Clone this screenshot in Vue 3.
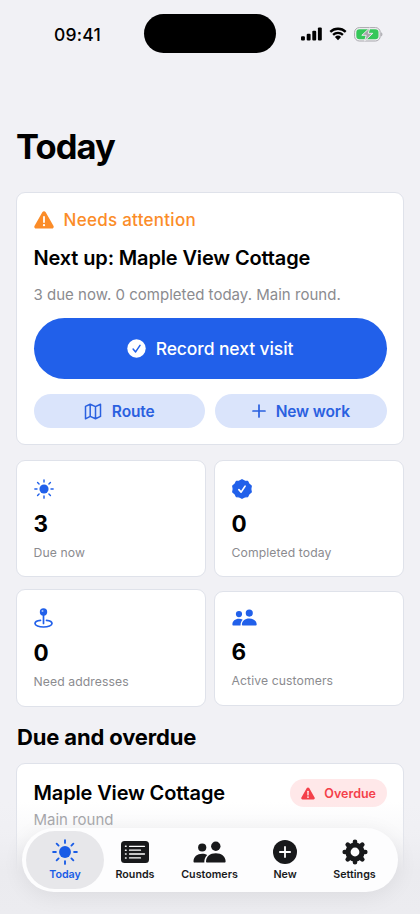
<script setup>
const stats = [
  { icon: 'sun', value: '3', label: 'Due now' },
  { icon: 'seal', value: '0', label: 'Completed today' },
  { icon: 'pin', value: '0', label: 'Need addresses' },
  { icon: 'people', value: '6', label: 'Active customers' },
]

const tabs = [
  { icon: 'sun', label: 'Today', active: true },
  { icon: 'list', label: 'Rounds' },
  { icon: 'people', label: 'Customers' },
  { icon: 'plus', label: 'New' },
  { icon: 'gear', label: 'Settings' },
]
</script>

<template>
  <div class="screen">
    <svg class="symbols" width="0" height="0" aria-hidden="true">
      <symbol id="sun" viewBox="0 0 28 28">
        <circle cx="14" cy="14" r="6.4" fill="currentColor" />
        <path
          d="M14 1.2v3M14 23.8v3M1.2 14h3M23.8 14h3M5 5l2.1 2.1M20.9 20.9l2.1 2.1M5 23l2.1-2.1M20.9 7.100l2.1-2.1"
          stroke="currentColor" stroke-width="2" stroke-linecap="round"
        />
      </symbol>
      <symbol id="seal" viewBox="0 0 20 20">
        <path
          d="M10 .8 12.600 2.100 15.500 2.400 16.900 5 19.200 7 18.700 10 19.200 13 16.900 15 15.500 17.600 12.600 17.900 10 19.200 7.400 17.900 4.500 17.600 3.100 15 .8 13 1.300 10 .8 7 3.100 5 4.500 2.400 7.400 2.100Z"
          fill="currentColor" stroke="currentColor" stroke-width="1.400" stroke-linejoin="round"
        />
        <path d="m6.900 10.600 2.200 2.500 4-6" fill="none" stroke="#fff" stroke-width="1.700" stroke-linecap="round" stroke-linejoin="round" />
      </symbol>
      <symbol id="pin" viewBox="0 0 20 20">
        <circle cx="9.500" cy="4" r="3.700" fill="currentColor" />
        <circle cx="8.500" cy="3" r="1" fill="#a9c3fa" />
        <path d="M9.500 7v8.500" stroke="currentColor" stroke-width="1.700" stroke-linecap="round" />
        <path d="M6.500 12.300C3.200 12.600 1 13.900 1 15.500c0 2 3.800 3.500 8.500 3.500s8.500-1.500 8.500-3.500c0-1.600-2.200-2.900-5.500-3.200" fill="none" stroke="currentColor" stroke-width="1.700" stroke-linecap="round" />
      </symbol>
      <symbol id="people" viewBox="0 0 33 22">
        <circle cx="22.800" cy="5.200" r="4.700" fill="currentColor" />
        <path d="M13 20.500c0-5 4-8.300 9.800-8.300s9.800 3.300 9.800 8.300c0 .7-.4 1-1.200 1H14.200c-.8 0-1.200-.3-1.200-1Z" fill="currentColor" />
        <circle cx="9.200" cy="6.500" r="4.100" fill="currentColor" />
        <path d="M.5 20.300c0-4.500 3.700-7.500 8.700-7.500 2 0 3.700.5 5 1.300-1.900 1.800-3 4.300-2.900 7.400H1.600c-.8 0-1.100-.4-1.100-1.200Z" fill="currentColor" />
      </symbol>
      <symbol id="list" viewBox="0 0 28 22">
        <rect width="28" height="22" rx="3.500" fill="currentColor" />
        <path d="M8.500 5.300h15M8.500 9.200h11M8.500 13h15M8.500 16.900h11" stroke="#fff" stroke-width="1.300" stroke-linecap="round" />
        <path d="M4.500 5.300h.6M4.500 9.200h.6M4.500 13h.6M4.500 16.900h.6" stroke="#fff" stroke-width="1.500" stroke-linecap="round" />
      </symbol>
      <symbol id="plus" viewBox="0 0 24 24">
        <circle cx="12" cy="12" r="12" fill="currentColor" />
        <path d="M12 6.900v10.200M6.900 12h10.200" stroke="#fff" stroke-width="1.800" stroke-linecap="round" />
      </symbol>
      <symbol id="gear" viewBox="0 0 26 26">
        <circle cx="13" cy="13" r="7" fill="none" stroke="currentColor" stroke-width="5.200" />
        <path
          d="M13 2.700v2M13 21.300v2M2.700 13h2M21.300 13h2M5.700 5.700l1.500 1.500M18.800 18.800l1.500 1.500M5.700 20.300l1.500-1.500M18.800 7.200l1.500-1.500"
          stroke="currentColor" stroke-width="4.600" stroke-linecap="round"
        />
      </symbol>
      <symbol id="warn" viewBox="0 0 20 18">
        <path d="M8.300 1.200a2 2 0 0 1 3.400 0l7.700 13.500a1.900 1.900 0 0 1-1.700 2.900H2.300a1.900 1.900 0 0 1-1.700-2.900Z" fill="currentColor" />
        <path d="M10 5.800v5.300" stroke="#fff" stroke-width="1.800" stroke-linecap="round" />
        <circle cx="10" cy="14.200" r="1.150" fill="#fff" />
      </symbol>
    </svg>

    <header class="status">
      <span class="clock">09:41</span>
      <span class="island"></span>
      <div class="indicators">
        <svg width="21" height="14" viewBox="0 0 21 14">
          <rect x="0" y="9.200" width="3.900" height="4.300" rx="1.100" />
          <rect x="5.700" y="6.700" width="3.900" height="6.800" rx="1.100" />
          <rect x="11.300" y="3.700" width="3.900" height="9.800" rx="1.100" />
          <rect x="16.900" y=".5" width="3.900" height="13" rx="1.100" />
        </svg>
        <svg width="18" height="14" viewBox="0 0 18 14">
          <path d="M1.300 4.900a11 11 0 0 1 15.400 0M4.100 7.900a7 7 0 0 1 9.800 0" fill="none" stroke="#000" stroke-width="2.300" />
          <path d="M5.900 9.900a4.500 4.500 0 0 1 6.200 0L9 13.200Z" />
        </svg>
        <svg width="29" height="15" viewBox="0 0 29 15">
          <rect x=".6" y=".6" width="25.600" height="13.400" rx="4.700" fill="#f2f2f4" stroke="#a9a7ad" stroke-width="1" />
          <rect x="2.300" y="2.300" width="22.200" height="10" rx="3.200" fill="#35c759" />
          <path d="M27.400 5.200c1.200.5 1.200 3.700 0 4.200Z" fill="#8f8f94" />
          <path d="m15.800.8-8 7.500h4.400L10.600 14l8.200-7.700h-4.500Z" fill="#a7a5aa" stroke="#f2f2f4" stroke-width=".9" />
        </svg>
      </div>
    </header>

    <main>
      <h1>Today</h1>

      <section class="card hero">
        <div class="attention">
          <svg width="20" height="18"><use href="#warn" /></svg>
          <span>Needs attention</span>
        </div>
        <h2>Next up: Maple View Cottage</h2>
        <p class="summary">3 due now. 0 completed today. Main round.</p>
        <button class="primary">
          <svg width="19" height="19" viewBox="0 0 19 19">
            <circle cx="9.500" cy="9.500" r="9.200" fill="#fff" />
            <path d="m6.100 10 2.500 2.900 4.400-6.600" fill="none" stroke="#2160ea" stroke-width="1.500" stroke-linecap="round" stroke-linejoin="round" />
          </svg>
          <span>Record next visit</span>
        </button>
        <div class="actions">
          <button>
            <svg width="18" height="17" viewBox="0 0 18 17" fill="none" stroke="currentColor" stroke-width="1.500" stroke-linejoin="round">
              <path d="M1.500 3.400 6.200 1.200l5.300 2.400 5-2.400v12.200L11.500 15.800l-5.300-2.400-4.700 2.400ZM6.200 1.200v12.200M11.500 3.600v12.200" />
            </svg>
            <span>Route</span>
          </button>
          <button>
            <svg width="14" height="14" viewBox="0 0 14 14" stroke="currentColor" stroke-width="1.700" stroke-linecap="round">
              <path d="M7 1v12M1 7h12" />
            </svg>
            <span>New work</span>
          </button>
        </div>
      </section>

      <section class="stats">
        <article v-for="s in stats" :key="s.label" class="card stat" :class="s.icon">
          <svg class="stat-icon"><use :href="'#' + s.icon" /></svg>
          <strong>{{ s.value }}</strong>
          <span>{{ s.label }}</span>
        </article>
      </section>

      <h3>Due and overdue</h3>

      <section class="card visit">
        <div class="visit-head">
          <h2>Maple View Cottage</h2>
          <span class="badge">
            <svg width="14" height="13"><use href="#warn" /></svg>
            <span>Overdue</span>
          </span>
        </div>
        <p>Main round</p>
      </section>
    </main>

    <div class="fade"></div>
    <nav class="tabs">
      <a v-for="t in tabs" :key="t.label" :class="['tab', t.icon, { active: t.active }]">
        <svg><use :href="'#' + t.icon" /></svg>
        <span>{{ t.label }}</span>
      </a>
    </nav>
  </div>
</template>

<style>
body {
  background: #f1f1f5;
}
</style>

<style scoped>
* {
  box-sizing: border-box;
}

.screen {
  position: relative;
  width: 420px;
  height: 914px;
  overflow: hidden;
  background: #f1f1f5;
  color: #000;
  font-family: Inter, "Liberation Sans", sans-serif;
}

.symbols {
  position: absolute;
}

svg {
  display: block;
  flex: none;
}

h1, h2, h3, p {
  margin: 0;
  white-space: nowrap;
}

button {
  border: 0;
  padding: 0;
  font: inherit;
}

.status {
  display: grid;
  grid-template-columns: 144px 132px 1fr;
  align-items: center;
  height: 39px;
  margin-top: 14px;
}

.clock {
  padding-left: 54px;
  padding-top: 2px;
  font-size: 17.500px;
  font-weight: 500;
  line-height: 22px;
  letter-spacing: 0.2px;
}

.island {
  height: 39px;
  border-radius: 20px;
  background: #000;
}

.indicators {
  display: flex;
  align-items: center;
  gap: 7px;
  padding: 1px 0 0 25px;
}

main {
  padding: 74px 16px 0;
}

h1 {
  height: 40px;
  font-size: 34.500px;
  line-height: 40px;
  font-weight: 700;
  letter-spacing: -0.9px;
}

.card {
  background: #fff;
  border: 1px solid #dfe2ea;
  border-radius: 9px;
}

.hero {
  height: 253px;
  margin-top: 25px;
  padding: 15px 16px 0 16.500px;
}

.attention {
  display: flex;
  align-items: center;
  gap: 10px;
  height: 24px;
  color: #fb8c28;
  font-size: 17px;
  font-weight: 500;
  letter-spacing: 0.27px;
}

h2 {
  font-size: 20px;
  line-height: 28px;
  font-weight: 600;
  letter-spacing: -0.14px;
}

.hero h2 {
  margin-top: 12px;
}

.summary {
  margin-top: 12px;
  color: #8b8b8f;
  font-size: 15px;
  line-height: 22px;
  letter-spacing: 0.02px;
}

.primary {
  display: flex;
  align-items: center;
  justify-content: center;
  gap: 10px;
  width: 353px;
  height: 61px;
  margin-top: 12px;
  border-radius: 31px;
  background: #2160ea;
  color: #fff;
  font-size: 17.500px;
  font-weight: 500;
  letter-spacing: -0.1px;
}

.actions {
  display: grid;
  grid-template-columns: 1fr 1fr;
  gap: 10px;
  width: 353px;
  margin-top: 15px;
}

.actions button {
  display: flex;
  align-items: center;
  justify-content: center;
  gap: 10px;
  height: 34px;
  border-radius: 17px;
  background: #dae4fb;
  color: #2a60e0;
  font-size: 15.500px;
  font-weight: 600;
  letter-spacing: -0.1px;
}

.stats {
  display: grid;
  grid-template-columns: 190px 190px;
  grid-template-rows: 117px 118px;
  gap: 12px 8px;
  align-items: center;
  margin-top: 15px;
}

.stat {
  display: flex;
  flex-direction: column;
  height: 117px;
  padding: 18px 16px 0 16.500px;
}

.stat.pin {
  height: 118px;
}

.stat.people {
  height: 115px;
  padding-top: 17px;
}

.stat-icon {
  width: 20px;
  height: 20px;
  color: #2160ea;
}

.stat.people .stat-icon {
  width: 25px;
  height: 17px;
  margin-bottom: 3px;
}

.stat strong {
  margin-top: 11px;
  font-size: 22.500px;
  line-height: 28px;
  font-weight: 700;
}

.stat.people strong {
  margin-top: 9px;
}

.stat span {
  margin-top: 7px;
  color: #8b8b8f;
  font-size: 12.200px;
  line-height: 16px;
  letter-spacing: 0.1px;
}

h3 {
  margin-top: 15px;
  padding-left: 1px;
  font-size: 22px;
  line-height: 30px;
  font-weight: 700;
  letter-spacing: -0.15px;
}

.visit {
  height: 160px;
  margin-top: 11px;
  padding: 15px 16px 0 16.500px;
}

.visit-head {
  display: flex;
  justify-content: space-between;
  align-items: center;
}

.badge {
  display: flex;
  align-items: center;
  gap: 9px;
  height: 28px;
  padding: 0 11px;
  border-radius: 14px;
  background: #ffe8e9;
  color: #f4404a;
  font-size: 12.500px;
  font-weight: 600;
}

.visit p {
  margin-top: 2px;
  color: #98989c;
  font-size: 15px;
  line-height: 22px;
}

.fade {
  position: absolute;
  left: 0;
  right: 0;
  bottom: 0;
  height: 112px;
  background: linear-gradient(rgba(237, 237, 241, 0), rgba(237, 237, 241, 0.35) 30%, #ebebef 62%, #ececf0);
}

.tabs {
  position: absolute;
  left: 22px;
  top: 828px;
  display: grid;
  grid-template-columns: 78px 62px 87px 64px 75px;
  width: 376px;
  height: 64px;
  padding: 3px 4px;
  border-radius: 32px;
  background: #fdfdfe;
  box-shadow: 0 4px 22px rgba(0, 0, 0, 0.07);
}

.tab {
  display: flex;
  flex-direction: column;
  align-items: center;
  height: 58px;
  padding-top: 8px;
  border-radius: 29px;
  color: #18191b;
  font-size: 10.700px;
  font-weight: 600;
}

.tab.active {
  background: #e7e7ea;
  color: #195ce6;
}

.tab svg {
  width: 28px;
  height: 26px;
}

.tab.list svg {
  height: 22px;
  margin: 2px 0;
}

.tab.people svg {
  width: 33px;
  height: 22px;
  margin: 2px 0;
}

.tab.plus svg {
  height: 24px;
  margin: 1px 0;
}

.tab span {
  margin-top: 3px;
  line-height: 14px;
}
</style>
